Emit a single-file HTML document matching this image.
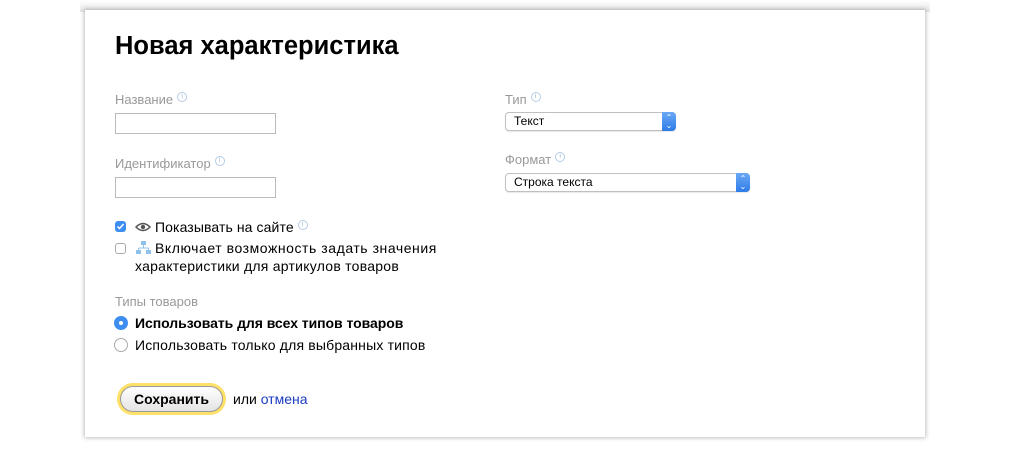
<!DOCTYPE html>
<html><head><meta charset="utf-8"><style>
body{margin:0;width:1010px;height:452px;background:#fff;font-family:"Liberation Sans",Arial,sans-serif;position:relative;overflow:hidden}
.top{position:absolute;left:80px;top:0;width:850px;height:12px;background:linear-gradient(#fff,#e6e6e6)}
.panel{position:absolute;left:85px;top:10px;width:840px;height:427px;background:#fff;box-shadow:0 0 4px 1px rgba(0,0,0,.25)}
.abs{position:absolute;white-space:nowrap}
h1{position:absolute;left:115px;top:32px;margin:0;font-size:25.5px;font-weight:bold;color:#000}
.lbl{color:#999;font-size:13px}
.i{display:inline-block;width:8px;height:8px;border:1px solid #b5cde6;border-radius:50%;font-size:7px;color:#9bb8d8;text-align:center;line-height:8px;vertical-align:6px;margin-left:4px}
.inp{position:absolute;width:161px;height:21px;border:1px solid #bbb;box-sizing:border-box}
.sel{position:absolute;height:19px;border:1px solid #c0c0c0;border-radius:4px;box-sizing:border-box;font-size:12px;line-height:17px;padding-left:8px;color:#000;box-shadow:0 1px 1px rgba(0,0,0,.1)}
.sel b{position:absolute;right:-1px;top:-1px;width:14px;height:19px;background:linear-gradient(#6aa8f5,#2f7ce8);border-radius:0 4px 4px 0;color:#fff;font-size:8px;line-height:8px;text-align:center;font-weight:normal;padding-top:2px;box-sizing:border-box}
.t{font-size:14px;color:#000}
.cb{position:absolute;width:11px;height:11px;border-radius:3px;box-sizing:border-box}
</style></head><body>
<div class="top"></div>
<div class="panel"></div>
<h1>Новая характеристика</h1>
<div class="abs lbl" style="left:115px;top:92px">Название<span class="i">i</span></div>
<div class="inp" style="left:115px;top:113px"></div>
<div class="abs lbl" style="left:115px;top:156px">Идентификатор<span class="i">i</span></div>
<div class="inp" style="left:115px;top:177px"></div>
<div class="abs lbl" style="left:505px;top:92px">Тип<span class="i">i</span></div>
<div class="sel" style="left:505px;top:112px;width:171px">Текст<b>⌃<br>⌄</b></div>
<div class="abs lbl" style="left:505px;top:152px">Формат<span class="i">i</span></div>
<div class="sel" style="left:505px;top:173px;width:245px">Строка текста<b>⌃<br>⌄</b></div>
<div class="cb" style="left:115px;top:221px;background:#3d8ef0"><svg width="11" height="11" style="position:absolute;left:0;top:0"><path d="M2.5 5.5l2 2 4-4.5" stroke="#fff" stroke-width="1.5" fill="none"/></svg></div>
<svg class="abs" style="left:135px;top:221px" width="16" height="12"><path d="M1 6Q8 -1 15 6Q8 13 1 6Z" fill="none" stroke="#555" stroke-width="1.5"/><circle cx="8" cy="6" r="2.2" fill="#555"/></svg>
<div class="abs t" style="left:155px;top:219px;letter-spacing:0.1px">Показывать на сайте<span class="i">i</span></div>
<div class="cb" style="left:115px;top:243px;border:1px solid #aaa"></div>
<svg class="abs" style="left:136px;top:241px" width="15" height="14"><rect x="5" y="0" width="5" height="4" fill="#8fc1ea"/><path d="M7.5 4v3M2.5 7h10M2.5 7v2M12.5 7v2" stroke="#8fc1ea"/><rect x="0" y="9" width="5" height="4" fill="#8fc1ea"/><rect x="10" y="9" width="5" height="4" fill="#8fc1ea"/></svg>
<div class="abs t" style="left:155px;top:240px;letter-spacing:0.55px">Включает возможность задать значения</div>
<div class="abs t" style="left:135px;top:258px;letter-spacing:0.25px">характеристики для артикулов товаров</div>
<div class="abs lbl" style="left:115px;top:294px">Типы товаров</div>
<div class="abs" style="left:114px;top:316px;width:14px;height:14px;border-radius:50%;background:#3d8ef0"><div style="position:absolute;left:5px;top:5px;width:4px;height:4px;border-radius:50%;background:#fff"></div></div>
<div class="abs t" style="left:135px;top:315px;font-weight:bold;letter-spacing:-0.05px">Использовать для всех типов товаров</div>
<div class="abs" style="left:114px;top:338px;width:14px;height:14px;border-radius:50%;border:1px solid #aaa;box-sizing:border-box"></div>
<div class="abs t" style="left:135px;top:337px;letter-spacing:0.18px">Использовать только для выбранных типов</div>
<div class="abs" style="left:117px;top:383px;width:109px;height:32px;border-radius:16px;background:#ffdb4d;opacity:.85"></div>
<div class="abs" style="left:120px;top:386px;width:103px;height:26px;border-radius:13px;background:linear-gradient(#fff,#e4e4e4);border:1px solid #999;box-sizing:border-box;font-size:14px;font-weight:bold;text-align:center;line-height:24px">Сохранить</div>
<div class="abs t" style="left:233px;top:391px">или <span style="color:#1a3dc1">отмена</span></div>
</body></html>
